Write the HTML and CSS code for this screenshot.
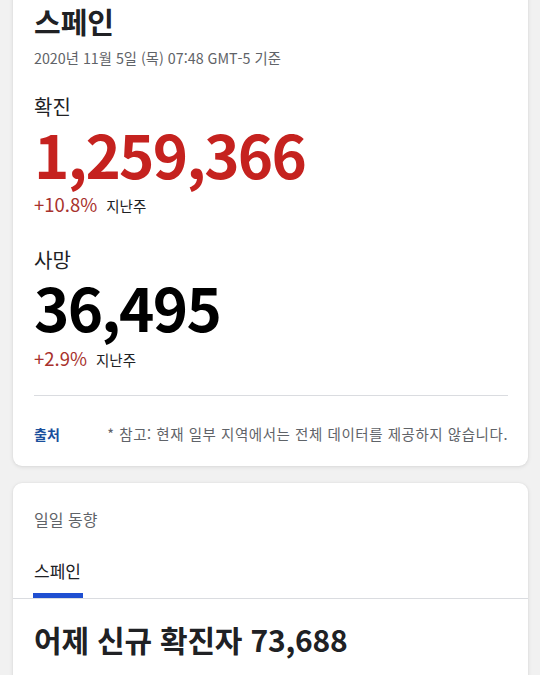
FILE: index.html
```html
<!DOCTYPE html>
<html lang="ko">
<head>
<meta charset="utf-8">
<link rel="stylesheet" href="styles.css">
</head>
<body>
<div class="page">
  <section class="card card-top">
    <h1 class="title">스페인</h1>
    <div class="date">2020년 11월 5일 (목) 07:48 GMT-5 기준</div>

    <div class="stat">
      <div class="stat-label">확진</div>
      <div class="stat-value red">1,259,366</div>
      <div class="stat-change"><span class="pct">+10.8%</span><span class="period">지난주</span></div>
    </div>

    <div class="stat stat-second">
      <div class="stat-label">사망</div>
      <div class="stat-value black">36,495</div>
      <div class="stat-change"><span class="pct">+2.9%</span><span class="period">지난주</span></div>
    </div>

    <div class="footer">
      <span class="source">출처</span>
      <span class="note">* 참고: 현재 일부 지역에서는 전체 데이터를 제공하지 않습니다.</span>
    </div>
  </section>

  <section class="card card-trend">
    <div class="trend-head">일일 동향</div>
    <div class="tabs">
      <div class="tab active">스페인</div>
    </div>
    <div class="trend-body">
      <div class="trend-title">어제 신규 확진자 73,688</div>
    </div>
  </section>
</div>
</body>
</html>
```

FILE: styles.css
```css
* { box-sizing: border-box; }
html, body {
  margin: 0;
  padding: 0;
  background: #f1f1f1;
  font-family: "Noto Sans CJK KR", "Noto Sans", sans-serif;
  color: #202124;
}
.page {
  display: flex;
  flex-direction: column;
  gap: 17px;
  padding: 0 12px 0 13px;
  margin-top: -12px;
}
.card {
  background: #fff;
  border-radius: 9px;
  box-shadow: 0 1px 4px rgba(0,0,0,0.10), 0 0 2px rgba(0,0,0,0.05);
}
.card-top {
  padding: 13px 20px 0 21px;
  height: 478px;
}
.title {
  margin: 0;
  font-size: 29px;
  font-weight: 700;
  line-height: 40px;
  color: #202124;
}
.date {
  font-size: 14.3px;
  line-height: 20px;
  color: #5f6368;
  margin-top: 7px;
}
.stat { margin-top: 26px; }
.stat-second { margin-top: 29px; }
.stat-label {
  font-size: 20px;
  line-height: 26px;
  color: #202124;
}
.stat-value {
  font-size: 60px;
  font-weight: 700;
  line-height: 66px;
  letter-spacing: -1.75px;
}
.red { color: #c5221f; }
.black { color: #000; }
.stat-change {
  display: flex;
  align-items: baseline;
  gap: 9px;
  line-height: 24px;
  margin-top: 6px;
}
.stat-second .stat-change { margin-top: 7px; }
.pct {
  font-size: 18.5px;
  color: #a8322d;
}
.period {
  font-size: 14.5px;
  color: #202124;
}
.footer {
  margin-top: 23px;
  border-top: 1px solid #dadce0;
  display: flex;
  justify-content: space-between;
  align-items: baseline;
  padding-top: 28px;
  font-size: 14px;
  line-height: 20px;
}
.source {
  font-weight: 700;
  color: #1a4f9c;
}
.note {
  font-size: 14.5px;
  letter-spacing: 0.55px;
  color: #5f6368;
}
.card-trend {
  padding-top: 24px;
  height: 260px;
}
.trend-head {
  padding: 0 21px;
  font-size: 16px;
  line-height: 24px;
  color: #5f6368;
}
.tabs {
  margin-top: 28px;
  border-bottom: 1px solid #dadce0;
  display: flex;
  padding: 0 20px;
}
.tab {
  font-size: 17px;
  line-height: 24px;
  padding: 0 1px 15px;
  min-width: 50px;
  color: #202124;
}
.tab.active {
  box-shadow: inset 0 -5px 0 #1f4fd1;
}
.trend-body {
  padding: 20px 21px 0;
}
.trend-title {
  font-size: 30px;
  font-weight: 700;
  line-height: 40px;
  letter-spacing: -0.2px;
  color: #202124;
}
```
